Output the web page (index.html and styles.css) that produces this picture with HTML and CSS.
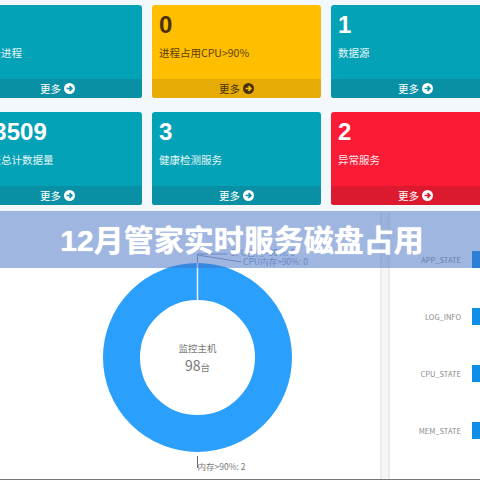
FILE: index.html
```html
<!DOCTYPE html>
<html>
<head>
	<meta charset="utf-8">
	<title>12月管家实时服务磁盘占用</title>
	<link rel="stylesheet" href="styles.css">
</head>
<body>
	<svg class="defs" width="0" height="0">
		<symbol id="go" viewBox="0 0 12 12">
			<circle cx="6" cy="6" r="6" fill="currentColor"/>
			<path class="go-arrow" d="M2.8 6h5.6M6 3.4 8.6 6 6 8.6" fill="none" stroke-width="1.8"/>
		</symbol>
	</svg>
	<div class="cards">
		<div class="card teal">
			<div class="card-body"><b>9</b><span>业务进程</span></div>
			<a class="card-more">更多 <svg><use href="#go"/></svg></a>
		</div>
		<div class="card yellow">
			<div class="card-body"><b>0</b><span>进程占用CPU&gt;90%</span></div>
			<a class="card-more">更多 <svg><use href="#go"/></svg></a>
		</div>
		<div class="card teal">
			<div class="card-body"><b>1</b><span>数据源</span></div>
			<a class="card-more">更多 <svg><use href="#go"/></svg></a>
		</div>
		<div class="card teal">
			<div class="card-body"><b>13509</b><span>报表总计数据量</span></div>
			<a class="card-more">更多 <svg><use href="#go"/></svg></a>
		</div>
		<div class="card teal">
			<div class="card-body"><b>3</b><span>健康检测服务</span></div>
			<a class="card-more">更多 <svg><use href="#go"/></svg></a>
		</div>
		<div class="card red">
			<div class="card-body"><b>2</b><span>异常服务</span></div>
			<a class="card-more">更多 <svg><use href="#go"/></svg></a>
		</div>
	</div>
	<div class="lower">
		<svg class="chart" viewBox="0 212 380 267">
			<circle cx="197.5" cy="357.5" r="76" fill="none" stroke="#2b9ffc" stroke-width="37"/>
			<path d="M197.5 263v38" stroke="#e8f4ff" stroke-width="1.5"/>
			<path class="lead" d="M197.5 263v-9h30M197.5 255l44 7"/>
			<path d="M197.5 456v12" stroke="#666" stroke-width="1"/>
			<text class="t-sm t-faint" x="243" y="265">CPU内存&gt;90%: 0</text>
			<text class="t-sm t-faint" x="230" y="255.5">CPU占用&gt;90%: 0</text>
			<text class="t-sm" x="197.5" y="470">内存&gt;90%: 2</text>
			<text class="t-mid" x="197.5" y="352">监控主机</text>
			<text class="t-big" x="197.5" y="371">98<tspan class="t-unit">台</tspan></text>
		</svg>
		<div class="stripes"></div>
		<ul class="legend">
			<li>APP_STATE<i></i></li>
			<li>LOG_INFO<i></i></li>
			<li>CPU_STATE<i></i></li>
			<li>MEM_STATE<i></i></li>
		</ul>
	</div>
	<div class="band">12月管家实时服务磁盘占用</div>
</body>
</html>
```

FILE: styles.css
```css
html, body{margin:0; padding:0;}
body{width:480px; height:480px; overflow:hidden; position:relative; background:#f3f8fc; font-family:"Noto Sans CJK SC", "Liberation Sans", sans-serif;}
.defs{display:block; height:0;}
.go-arrow{stroke:var(--ink);}

.cards{display:grid; grid-template-columns:169px 169px 169px; grid-auto-rows:93px; gap:14px 10px; margin-left:-27px; padding-top:5px;}
.card{display:flex; flex-direction:column; border-radius:3px; overflow:hidden; color:#fff; --ink:#0a90a4;}
.card-body{flex:1; display:flex; flex-direction:column; padding:5px 7px 0;}
.card-body b{font-family:"Liberation Sans", sans-serif; font-size:24px; line-height:30px; font-weight:700;}
.card-body span{font-size:10.5px; line-height:14px; margin-top:6px; opacity:.9;}
.card-more{height:19px; display:flex; align-items:center; justify-content:center; gap:3px; font-size:10.5px;}
.card-more svg{width:11px; height:11px;}
.teal{background:#04a2b6;}
.teal .card-more{background:#0a90a4;}
.yellow{background:#ffbe00; color:#4a3208; --ink:#ffbe00;}
.yellow .card-more{background:#e6ab05;}
.red{background:#fb1b35; --ink:#db1a30;}
.red .card-more{background:#db1a30;}

.lower{display:flex; height:267px; margin-top:7px; background:#fff; border-bottom:1px solid #777;}
.chart{width:380px; height:267px; flex:none;}
.chart text{font-family:"Noto Sans CJK SC", "Liberation Sans", sans-serif; fill:#777;}
.chart .t-faint{fill:#8a9cc0;}
.lead{fill:none; stroke:#8a9cc0; stroke-width:1;}
.t-sm{font-size:8.5px;}
.t-mid{font-size:9.5px; text-anchor:middle;}
.t-big{font-size:14px; text-anchor:middle;}
.t-unit{font-size:9.5px;}
.stripes{width:6px; flex:none; background:#f6f6f6; border-left:2px solid #ececec; border-right:2px solid #ececec;}
.legend{flex:1; list-style:none; margin:0; padding:19px 0 0;}
.legend li{height:57px; display:flex; align-items:center; justify-content:flex-end; gap:11px; font-size:7.5px; color:#888;}
.legend i{display:block; width:8px; height:17px; background:#0e8ee9;}

.band{position:absolute; left:0; right:0; top:211px; height:57px; padding:0 0 4px 4px; box-sizing:border-box; display:flex; align-items:center; justify-content:center; background:rgba(70,115,195,.52); color:#fff; font-size:30px; font-weight:700; font-family:"Liberation Sans", "Noto Sans CJK SC", sans-serif; text-shadow:0 0 1px #fff;}
```
